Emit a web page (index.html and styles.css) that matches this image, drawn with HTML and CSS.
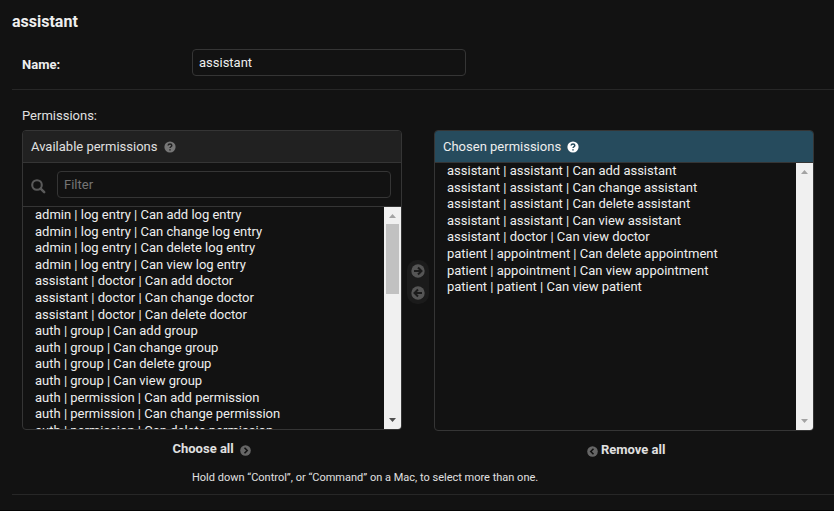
FILE: index.html
```html
<!DOCTYPE html>
<html lang="en">
<head>
<meta charset="utf-8">
<title>assistant</title>
<link rel="stylesheet" href="styles.css">
</head>
<body>
<main class="page">
  <h2 class="title">assistant</h2>
  <div class="name-row">
    <label class="name-label" for="name">Name:</label>
    <input class="field name-field" id="name" type="text" value="assistant">
  </div>
  <section class="permissions">
    <div class="perm-label">Permissions:</div>
    <div class="selector">
      <div class="column">
        <div class="box box-available">
          <h3 class="box-head"><span>Available permissions</span>
            <svg class="help" viewBox="0 0 12 12"><circle cx="6" cy="6" r="5.6" fill="#777"/><path d="M4.1 4.5C4.3 2.4 7.8 2.4 7.8 4.5C7.8 5.8 6 5.7 6 7.1M6 8.2V9.6" fill="none" stroke="#212121" stroke-width="1.5"/></svg>
          </h3>
          <div class="filter">
            <svg class="search" viewBox="0 0 15 15"><circle cx="6" cy="6" r="4.8" fill="none" stroke="#5a5a5a" stroke-width="2.1"/><path d="M9.6 9.6L13.2 13.2" stroke="#5a5a5a" stroke-width="2.5" stroke-linecap="round"/></svg>
            <input class="field filter-field" type="text" placeholder="Filter">
          </div>
          <div class="list">
            <ul class="options">
              <li>admin | log entry | Can add log entry</li>
              <li>admin | log entry | Can change log entry</li>
              <li>admin | log entry | Can delete log entry</li>
              <li>admin | log entry | Can view log entry</li>
              <li>assistant | doctor | Can add doctor</li>
              <li>assistant | doctor | Can change doctor</li>
              <li>assistant | doctor | Can delete doctor</li>
              <li>auth | group | Can add group</li>
              <li>auth | group | Can change group</li>
              <li>auth | group | Can delete group</li>
              <li>auth | group | Can view group</li>
              <li>auth | permission | Can add permission</li>
              <li>auth | permission | Can change permission</li>
              <li>auth | permission | Can delete permission</li>
            </ul>
            <div class="scrollbar">
              <svg class="arrow" viewBox="0 0 17 17"><path d="M5 11L8.5 7L12 11Z" fill="#a3a3a3"/></svg>
              <div class="thumb"></div>
              <svg class="arrow arrow-down" viewBox="0 0 17 17"><path d="M5 6H12L8.5 10Z" fill="#505050"/></svg>
            </div>
          </div>
        </div>
        <a class="all choose-all"><span>Choose all</span>
          <svg class="all-icon" viewBox="0 0 11 11"><circle cx="5.5" cy="5.5" r="5.3" fill="#666"/><path d="M4.5 2.8L7.2 5.5L4.5 8.2" fill="none" stroke="#121212" stroke-width="1.6"/></svg>
        </a>
      </div>
      <div class="chooser">
        <svg class="move" viewBox="0 0 14 14"><circle cx="7" cy="7" r="6.7" fill="#555"/><path d="M3 7H10.2M7 3.5L10.5 7L7 10.5" fill="none" stroke="#1b1b1b" stroke-width="2"/></svg>
        <svg class="move" viewBox="0 0 14 14"><circle cx="7" cy="7" r="6.7" fill="#555"/><path d="M11 7H3.8M7 3.5L3.5 7L7 10.5" fill="none" stroke="#1b1b1b" stroke-width="2"/></svg>
      </div>
      <div class="column">
        <div class="box box-chosen">
          <h3 class="box-head head-chosen"><span>Chosen permissions</span>
            <svg class="help" viewBox="0 0 12 12"><circle cx="6" cy="6" r="5.6" fill="#fff"/><path d="M4.1 4.5C4.3 2.4 7.8 2.4 7.8 4.5C7.8 5.8 6 5.7 6 7.1M6 8.2V9.6" fill="none" stroke="#264b5d" stroke-width="1.5"/></svg>
          </h3>
          <div class="list">
            <ul class="options">
              <li>assistant | assistant | Can add assistant</li>
              <li>assistant | assistant | Can change assistant</li>
              <li>assistant | assistant | Can delete assistant</li>
              <li>assistant | assistant | Can view assistant</li>
              <li>assistant | doctor | Can view doctor</li>
              <li>patient | appointment | Can delete appointment</li>
              <li>patient | appointment | Can view appointment</li>
              <li>patient | patient | Can view patient</li>
            </ul>
            <div class="scrollbar">
              <svg class="arrow" viewBox="0 0 17 17"><path d="M5 11L8.5 7L12 11Z" fill="#a3a3a3"/></svg>
              <svg class="arrow arrow-down" viewBox="0 0 17 17"><path d="M5 6H12L8.5 10Z" fill="#a3a3a3"/></svg>
            </div>
          </div>
        </div>
        <a class="all remove-all">
          <svg class="all-icon" viewBox="0 0 11 11"><circle cx="5.5" cy="5.5" r="5.3" fill="#666"/><path d="M6.5 2.8L3.8 5.5L6.5 8.2" fill="none" stroke="#121212" stroke-width="1.6"/></svg>
          <span>Remove all</span>
        </a>
      </div>
    </div>
    <p class="hint">Hold down “Control”, or “Command” on a Mac, to select more than one.</p>
  </section>
</main>
</body>
</html>
```
FILE: styles.css
```css
* { box-sizing: border-box; }
body {
  margin: 0;
  height: 511px;
  overflow: hidden;
  background: #121212;
  color: #eee;
  font: 13px/16px Roboto, sans-serif;
  border-bottom: 1px solid #050505;
}
svg { display: block; flex: none; }
.page { padding-left: 12px; }
.title { margin: 0; padding-top: 12px; height: 36px; font-size: 16px; line-height: 19px; font-weight: 700; }
.name-row {
  display: flex;
  align-items: flex-start;
  height: 54px;
  padding: 13px 0 0 10px;
  border-bottom: 1px solid #272727;
}
.name-label { width: 170px; padding-top: 8px; font-weight: 700; }
.field {
  display: block;
  height: 27px;
  padding: 0 6px;
  border: 1px solid #353535;
  border-radius: 4px;
  background: #121212;
  color: #eee;
  font: 13px Roboto, sans-serif;
  outline: 0;
}
.field::placeholder { color: #757575; opacity: 1; }
.name-field { width: 274px; }
.permissions { height: 405px; padding: 18px 0 0 10px; border-bottom: 1px solid #272727; }
.perm-label { height: 22px; color: #e0e0e0; }
.selector { display: flex; height: 330px; }
.column { width: 380px; }
.box {
  display: flex;
  flex-direction: column;
  border: 1px solid #353535;
  border-radius: 4px;
  overflow: hidden;
}
.box-available { height: 300px; }
.box-chosen { height: 301px; }
.box-head {
  display: flex;
  flex: none;
  align-items: center;
  gap: 6.4px;
  height: 32px;
  margin: 0;
  padding-left: 8px;
  border-bottom: 1px solid #353535;
  background: #212121;
  color: #e0e0e0;
  font-size: 13px;
  font-weight: 400;
}
.head-chosen { background: #264b5d; color: #eee; }
.help { width: 12px; height: 12px; }
.filter {
  display: flex;
  flex: none;
  height: 44px;
  padding: 8px 10px 0 8px;
  border-bottom: 1px solid #353535;
}
.search { width: 15px; height: 15px; margin: 8px 11px 0 0; }
.filter-field { width: 334px; }
.list { display: flex; flex: 1; min-height: 0; }
.options {
  flex: 1;
  margin: 0;
  padding: 0 0 0 12px;
  list-style: none;
  overflow: hidden;
  line-height: 16.6px;
  white-space: nowrap;
}
.scrollbar { display: flex; flex-direction: column; width: 17px; background: #f0f0f0; }
.arrow { width: 17px; height: 17px; }
.arrow-down { margin-top: auto; }
.thumb { height: 70px; margin: 0 2px; background: #c1c1c1; }
.all { display: flex; align-items: center; height: 16px; font-weight: 700; color: #e0e0e0; }
.all-icon { width: 11px; height: 11px; margin-top: 2px; }
.choose-all { margin-top: 11px; padding-left: 150.5px; gap: 6px; }
.remove-all { margin-top: 11px; padding-left: 152.5px; gap: 3.5px; }
.chooser {
  display: flex;
  flex-direction: column;
  gap: 8px;
  width: 22px;
  height: 44px;
  margin: 130px 5px 0;
  padding: 4px;
  border-radius: 10px;
  background: #1b1b1b;
}
.move { width: 14px; height: 14px; }
.hint { margin: 11px 0 0 170px; font-size: 11px; line-height: 14px; color: #e0e0e0; }
```
